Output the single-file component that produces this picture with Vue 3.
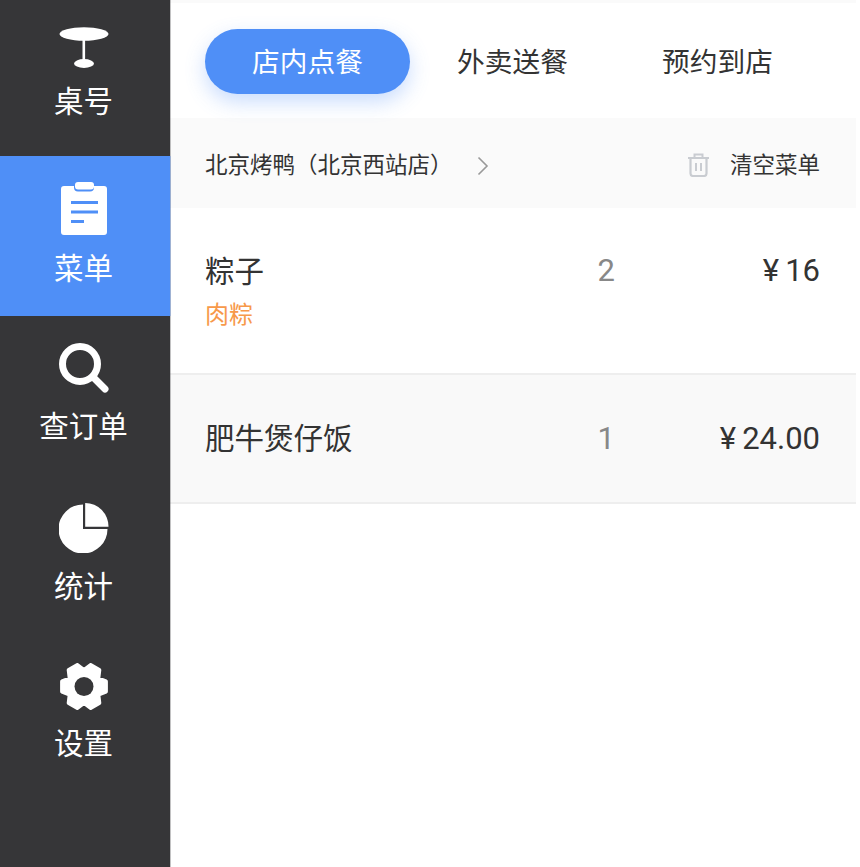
<script setup>
const navItems = [
  { key: 'table', label: '桌号' },
  { key: 'menu', label: '菜单', active: true },
  { key: 'search', label: '查订单' },
  { key: 'stats', label: '统计' },
  { key: 'settings', label: '设置' }
]
const tabs = [
  { label: '店内点餐', active: true },
  { label: '外卖送餐' },
  { label: '预约到店' }
]
const orders = [
  { name: '粽子', note: '肉粽', qty: 2, price: '16' },
  { name: '肥牛煲仔饭', qty: 1, price: '24.00' }
]
</script>

<template>
  <div class="page">
    <aside class="sidebar">
      <div v-for="item in navItems" :key="item.key" class="nav-item" :class="[item.key, { active: item.active }]">
        <svg v-if="item.key === 'table'" width="50" height="41" viewBox="0 0 50 41">
          <ellipse cx="25" cy="7" rx="24.5" ry="6.8" fill="#fff" />
          <rect x="23.500" y="12" width="2.600" height="22" fill="#fff" />
          <ellipse cx="25" cy="36.500" rx="10" ry="4.400" fill="#fff" />
        </svg>
        <svg v-else-if="item.key === 'menu'" width="46" height="53" viewBox="0 0 46 53">
          <path d="M3 4h10v1.500a4 4 0 0 0 4 4h12a4 4 0 0 0 4-4V4h10a3 3 0 0 1 3 3v43a3 3 0 0 1-3 3H3a3 3 0 0 1-3-3V7a3 3 0 0 1 3-3z" fill="#fff" />
          <rect x="14" y="0" width="19" height="7.500" rx="3" fill="#fff" />
          <path d="M10 20.500h27M10 30h27M10 39.500h13" stroke="#4f8ff7" stroke-width="2.800" fill="none" />
        </svg>
        <svg v-else-if="item.key === 'search'" width="50" height="50" viewBox="0 0 50 50">
          <circle cx="21" cy="21" r="17.500" stroke="#fff" stroke-width="7" fill="none" />
          <path d="M35 35l11 11" stroke="#fff" stroke-width="7" stroke-linecap="round" />
        </svg>
        <svg v-else-if="item.key === 'stats'" width="50" height="50" viewBox="0 0 50 50">
          <path d="M24 1.500V26h24.500A24.500 24.500 0 1 1 24 1.500z" fill="#fff" />
          <path d="M26.200 0A23.500 23.500 0 0 1 49.500 23.800H26.200z" fill="#fff" />
        </svg>
        <svg v-else width="50" height="47" viewBox="0 0 50 47">
          <polygon
            points="46.900,18.400 46.900,28.600 39.300,31.750 40.300,40 31.600,45 25,40 18.400,45 9.700,40 10.700,31.750 3.100,28.600 3.100,18.400 10.700,15.250 9.700,7 18.400,2 25,7 31.600,2 40.300,7 39.300,15.250"
            fill="#fff" stroke="#fff" stroke-width="4" stroke-linejoin="round"
          />
          <circle cx="25" cy="23.500" r="9.500" fill="#363638" />
        </svg>
        <span class="nav-label">{{ item.label }}</span>
      </div>
    </aside>

    <main class="main">
      <div class="tabs">
        <div v-for="tab in tabs" :key="tab.label" class="tab" :class="{ active: tab.active }">{{ tab.label }}</div>
      </div>

      <div class="shop-bar">
        <div class="shop">
          <span>北京烤鸭（北京西站店）</span>
          <svg class="chevron" width="12" height="20" viewBox="0 0 12 20">
            <path d="M1.500 1.500L10 10l-8.500 8.500" stroke="#999" stroke-width="1.600" fill="none" />
          </svg>
        </div>
        <div class="clear">
          <svg class="trash" width="23" height="25" viewBox="0 0 23 25">
            <path d="M1 6h21M7.500 5.500V2.500h8v3" stroke="#c9ccd1" stroke-width="2" fill="none" />
            <path d="M3.500 6v15.500a2.500 2.500 0 0 0 2.500 2.500h11a2.500 2.500 0 0 0 2.500-2.500V6" stroke="#c9ccd1" stroke-width="2.200" fill="none" />
            <path d="M9 11v8M14 11v8" stroke="#c9ccd1" stroke-width="2" />
          </svg>
          <span>清空菜单</span>
        </div>
      </div>

      <div v-for="(order, i) in orders" :key="order.name" class="order" :class="{ first: i === 0, odd: i === 1 }">
        <div class="order-info">
          <div class="order-name">{{ order.name }}</div>
          <div v-if="order.note" class="order-note">{{ order.note }}</div>
        </div>
        <div class="order-qty">{{ order.qty }}</div>
        <div class="order-price">¥<span class="price-num">{{ order.price }}</span></div>
      </div>
    </main>
  </div>
</template>

<style>
html, body {
  margin: 0;
  background: #fff;
}
</style>

<style scoped>
.page {
  display: flex;
  width: 860px;
  height: 867px;
  overflow: hidden;
  font-family: "Noto Sans CJK SC", "Liberation Sans", sans-serif;
}
.sidebar {
  position: relative;
  width: 170px;
  flex-shrink: 0;
  background: #363638;
  box-shadow: 1px 0 0 rgba(54, 54, 56, 0.3);
  display: flex;
  flex-direction: column;
}
.nav-item {
  height: 160px;
  box-sizing: border-box;
  padding-top: 27px;
  padding-right: 3px;
  display: flex;
  flex-direction: column;
  align-items: center;
  gap: 11px;
  color: #fff;
}
.nav-item.table {
  height: 156px;
}
.nav-item.active {
  background: #4f8ff7;
  box-shadow: 1px 0 0 rgba(79, 143, 247, 0.3);
  padding-top: 26px;
}
.nav-label {
  font-size: 29.500px;
  line-height: 40px;
}
.main {
  width: 686px;
  padding-top: 3px;
  background: linear-gradient(#fafafa 3px, #fff 3px);
  color: #333;
}
.tabs {
  display: flex;
  height: 115px;
  box-sizing: border-box;
  padding: 26px 35px 0;
}
.tab {
  width: 205px;
  height: 65px;
  border-radius: 33px;
  font-size: 27.700px;
  line-height: 62px;
  text-align: center;
  color: #333;
}
.tab.active {
  background: #4f8ff7;
  color: #fff;
  box-shadow: 0 8px 20px rgba(79, 143, 247, 0.3);
}
.shop-bar {
  height: 90px;
  background: #fafafa;
  padding: 0 36px 0 35px;
  display: flex;
  justify-content: space-between;
  align-items: center;
  font-size: 22.500px;
}
.shop {
  display: flex;
  align-items: center;
  gap: 14px;
}
.chevron {
  margin-left: 10px;
  margin-top: 6px;
}
.trash {
  margin-top: 2px;
}
.clear {
  display: flex;
  align-items: center;
  gap: 20px;
  font-size: 22.500px;
}
.order {
  display: flex;
  align-items: flex-start;
  height: 129px;
  box-sizing: border-box;
  padding: 41px 36px 0 35px;
  border-bottom: 2px solid #eeeeee;
  font-size: 29.500px;
}
.order.first {
  height: 167px;
  padding-top: 40px;
}
.order.odd {
  background: #f9f9f9;
}
.order-info {
  flex: 1;
}
.order-name {
  line-height: 44px;
  margin-top: -1px;
}
.order.odd .order-name {
  margin-top: -2px;
}
.order-note {
  font-size: 24px;
  line-height: 44px;
  color: #f7994a;
}
.order-qty {
  font-family: Roboto, "Liberation Sans", sans-serif;
  font-size: 31px;
  color: #888;
  line-height: 44px;
  margin-top: 1px;
}
.order-price {
  width: 205px;
  text-align: right;
  font-family: Roboto, "Liberation Sans", sans-serif;
  font-size: 31px;
  line-height: 44px;
  margin-top: 1px;
}
.price-num {
  margin-left: 6px;
}
</style>
